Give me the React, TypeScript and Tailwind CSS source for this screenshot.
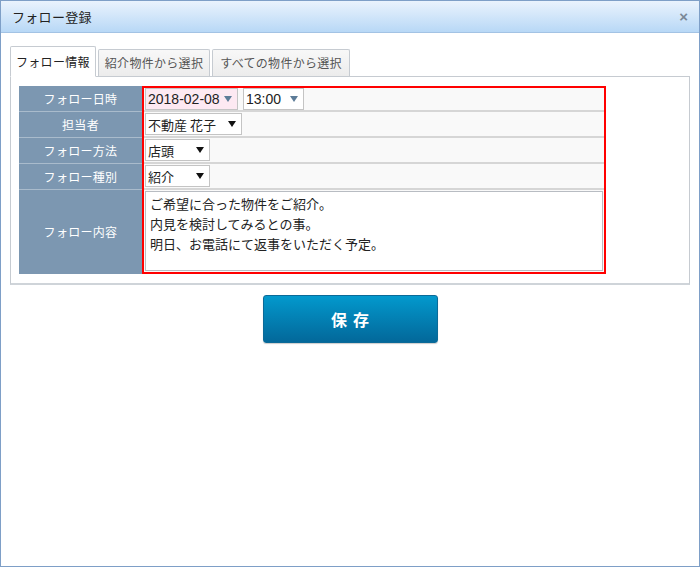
import React from 'react';

const jp = { fontFamily: '"Noto Sans CJK JP", "Noto Sans", sans-serif' };
const latin = { fontFamily: '"Liberation Sans", "Noto Sans CJK JP", sans-serif' };

const labels: { text: string; h: string }[] = [
  { text: 'フォロー日時', h: 'h-[26px]' },
  { text: '担当者', h: 'h-[26px]' },
  { text: 'フォロー方法', h: 'h-[26px]' },
  { text: 'フォロー種別', h: 'h-[26px]' },
  { text: 'フォロー内容', h: 'h-[84px]' },
];

const Caret = ({ color = '#111' }: { color?: string }) => (
  <svg width="8" height="6" viewBox="0 0 8 6" className="shrink-0">
    <path d="M0 0 L8 0 L4 6 Z" fill={color} />
  </svg>
);

const FakeSelect = ({
  value,
  width,
  pink,
  soft,
}: {
  value: string;
  width: string;
  pink?: boolean;
  soft?: boolean;
}) => (
  <div
    className={`${width} h-[22px] flex items-center justify-between pl-[2px] pr-[5px] border border-[#c4c4c4] text-[#222] ${
      soft ? 'text-[14px]' : 'text-[13px]'
    } ${pink ? 'bg-[#fde9f2]' : 'bg-white'}`}
  >
    <span className="leading-none whitespace-nowrap">{value}</span>
    {soft ? <Caret color="#5d7c98" /> : <Caret />}
  </div>
);

export default function App() {
  return (
    <div className="w-[700px] h-[567px] bg-white border border-[#7e9fc7] flex flex-col" style={jp}>
      {/* title bar */}
      <div className="h-[32px] shrink-0 flex items-center justify-between pl-[11px] pr-[11px] bg-gradient-to-b from-[#eaf3fd] to-[#b8d8f6] border-b border-[#a3c3e4]">
        <span className="text-[13px] text-[#222] tracking-[0.3px]">フォロー登録</span>
        <span className="text-[15px] font-bold text-[#7a8896] leading-none" style={latin}>
          ×
        </span>
      </div>

      <div className="px-[9px] pt-[13px]">
        {/* tabs */}
        <div className="flex items-end gap-[2px] h-[30px]">
          <div className="h-[31px] -mb-px relative z-10 px-[5px] flex items-center bg-white border border-[#c6cbd1] border-b-white rounded-t-[2px] text-[12px] tracking-[0.3px] text-[#222]">
            フォロー情報
          </div>
          <div className="h-[27px] px-[6px] flex items-center bg-gradient-to-b from-[#f8f8f8] to-[#ececec] border border-[#c6cbd1] border-b-0 rounded-t-[2px] text-[12px] tracking-[0.3px] text-[#555]">
            紹介物件から選択
          </div>
          <div className="h-[27px] px-[7px] flex items-center bg-gradient-to-b from-[#f8f8f8] to-[#ececec] border border-[#c6cbd1] border-b-0 rounded-t-[2px] text-[12px] tracking-[0.3px] text-[#555]">
            すべての物件から選択
          </div>
        </div>

        {/* panel */}
        <div className="border border-[#c6cbd1] border-b-2 border-b-[#cfd4d9] pl-[8px] pt-[9px] pb-[9px] pr-[8px]">
          <div className="flex">
            <div className="w-[123px] shrink-0 flex flex-col bg-[#7c97b1]">
              {labels.map((l) => (
                <div
                  key={l.text}
                  className={`${l.h} flex items-center justify-center border-b border-[#a9bbcc] last:border-b-0 text-[12px] tracking-[0.3px] text-white`}
                >
                  {l.text}
                </div>
              ))}
            </div>
            <div className="w-[464px] border-2 border-[#ff0000] flex flex-col bg-[#f9f9f9]">
              <div className="h-[24px] flex items-center gap-[5px] pl-[1px] border-b-2 border-[#d6d6d6]" style={latin}>
                <FakeSelect value="2018-02-08" width="w-[93px]" pink soft />
                <FakeSelect value="13:00" width="w-[61px]" soft />
              </div>
              <div className="h-[26px] flex items-center pl-[1px] border-b-2 border-[#d6d6d6]">
                <FakeSelect value="不動産 花子" width="w-[97px]" />
              </div>
              <div className="h-[26px] flex items-center pl-[1px] border-b-2 border-[#d6d6d6]">
                <FakeSelect value="店頭" width="w-[65px]" />
              </div>
              <div className="h-[26px] flex items-center pl-[1px] border-b-2 border-[#d6d6d6]">
                <FakeSelect value="紹介" width="w-[65px]" />
              </div>
              <div className="h-[82px] p-[1px] flex">
                <div className="flex-1 bg-white border border-[#b8bcc2] px-[4px] pt-[2px] text-[13px] leading-[20px] text-[#222]">
                  <div>ご希望に合った物件をご紹介。</div>
                  <div>内見を検討してみるとの事。</div>
                  <div>明日、お電話にて返事をいただく予定。</div>
                </div>
              </div>
            </div>
          </div>
        </div>

        {/* save */}
        <div className="flex justify-center pt-[10px]">
          <button className="w-[175px] h-[48px] rounded-[3px] flex items-center justify-center gap-[6px] bg-gradient-to-b from-[#0399cd] to-[#03689a] border border-[#0b6a98] text-white text-[16px] font-bold shadow-[0_1px_1px_rgba(0,0,0,0.2)]">
            <span>保</span>
            <span>存</span>
          </button>
        </div>
      </div>
    </div>
  );
}
